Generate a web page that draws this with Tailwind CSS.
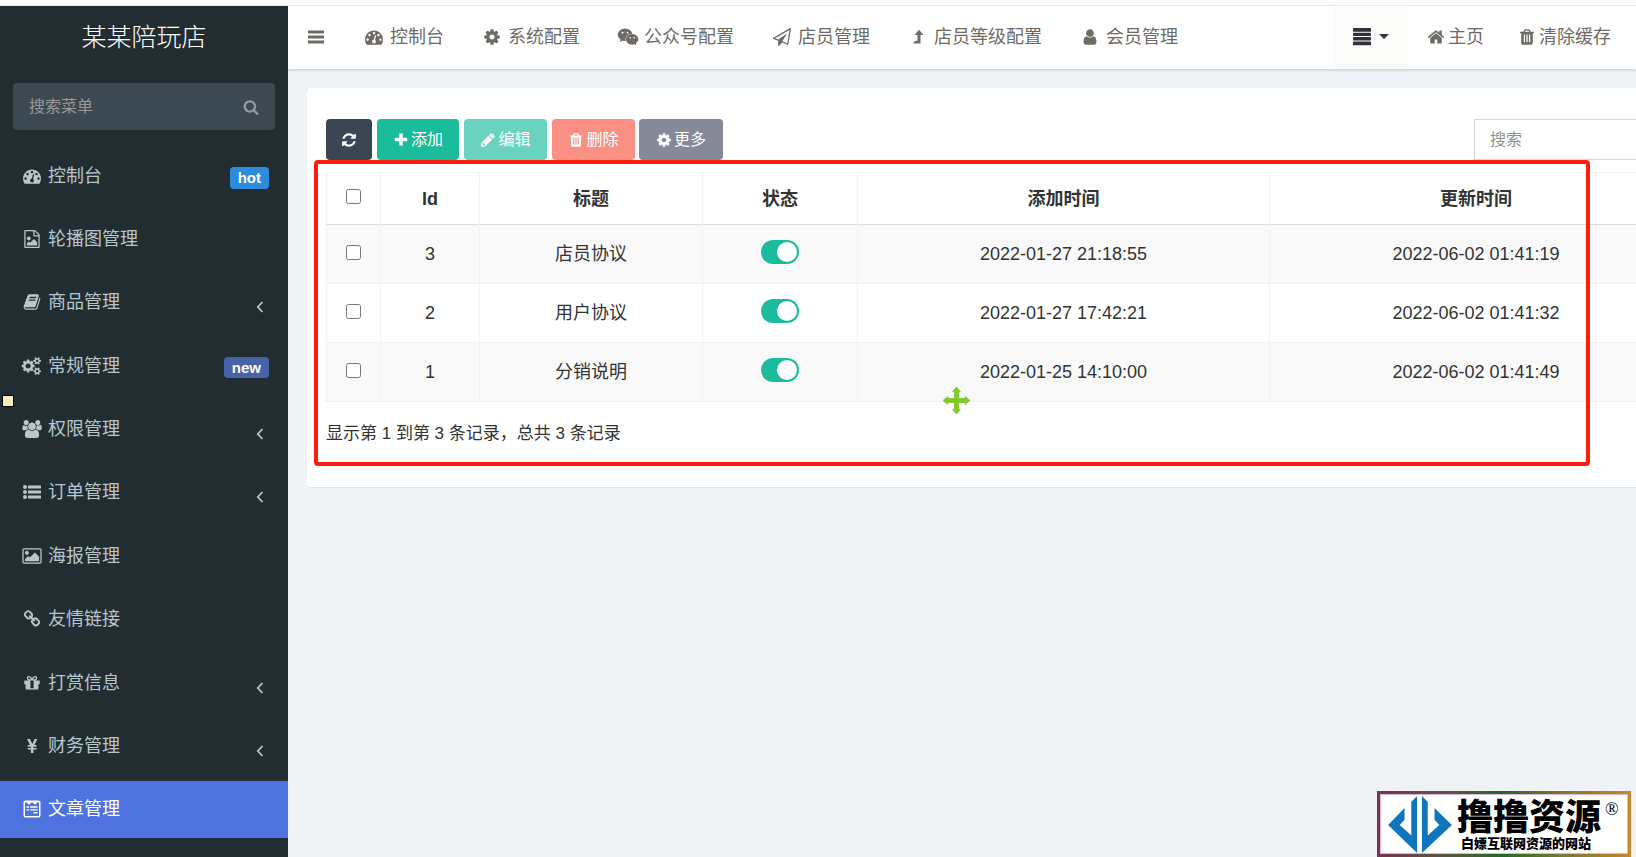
<!DOCTYPE html>
<html lang="zh-CN">
<head>
<meta charset="utf-8">
<meta name="viewport" content="width=device-width, initial-scale=1">
<title>某某陪玩店</title>
<script src="https://cdn.jsdelivr.net/npm/@tailwindcss/browser@4"></script>
</head>
<body class="relative flex h-screen flex-col overflow-hidden bg-white font-['Liberation_Sans','Noto_Sans_CJK_SC',sans-serif] text-lg leading-6 text-[#333]">

<!-- icon sprite -->
<svg class="hidden" aria-hidden="true">
  <symbol id="dash" viewBox="0 0 1792 1792"><path d="M384 1152q0-53-37.500-90.500t-90.500-37.500-90.500 37.500-37.500 90.500 37.500 90.500 90.500 37.500 90.500-37.500 37.500-90.500zm192-448q0-53-37.500-90.500t-90.500-37.500-90.500 37.500-37.500 90.500 37.500 90.500 90.500 37.500 90.500-37.500 37.500-90.500zm428 481l101-382q6-26-7.500-48.500t-38.500-29.500-48 6.500-30 39.500l-101 382q-60 5-107 43.500t-63 98.500q-20 77 20 146t117 89 146-20 89-117q16-60-6-117t-72-91zm660-33q0-53-37.500-90.500t-90.500-37.500-90.500 37.500-37.500 90.500 37.500 90.500 90.500 37.500 90.500-37.500 37.500-90.500zm-640-640q0-53-37.500-90.500t-90.500-37.500-90.500 37.500-37.500 90.500 37.500 90.500 90.500 37.500 90.500-37.500 37.500-90.500zm448 192q0-53-37.500-90.500t-90.500-37.500-90.500 37.500-37.500 90.500 37.500 90.500 90.500 37.500 90.500-37.500 37.500-90.500zm320 448q0 261-141 483-19 29-54 29h-1402q-35 0-54-29-141-221-141-483 0-182 71-348t191-286 286-191 348-71 348 71 286 191 191 286 71 348z"/></symbol>
  <symbol id="cog" viewBox="0 0 1792 1792"><path d="M1152 896q0-106-75-181t-181-75-181 75-75 181 75 181 181 75 181-75 75-181zm512-109v222q0 12-8 23t-20 13l-185 28q-19 54-39 91 35 50 107 138 10 12 10 25t-9 23q-27 37-99 108t-94 71q-12 0-26-9l-138-108q-44 23-91 38-16 136-29 186-7 28-36 28h-222q-14 0-24.500-8.500t-11.500-21.500l-28-184q-49-16-90-37l-141 107q-10 9-25 9-14 0-25-11-126-114-165-168-7-10-7-23 0-12 8-23 15-21 51-66.500t54-70.500q-27-50-41-99l-183-27q-13-2-21-12.500t-8-23.500v-222q0-12 8-23t19-13l186-28q14-46 39-92-40-57-107-138-10-12-10-24 0-10 9-23 26-36 98.500-107.500t94.500-71.500q13 0 26 10l138 107q44-23 91-38 16-136 29-186 7-28 36-28h222q14 0 24.500 8.500t11.500 21.500l28 184q49 16 90 37l142-107q9-9 24-9 13 0 25 10 129 119 165 170 7 8 7 22 0 12-8 23-15 21-51 66.500t-54 70.500q26 50 41 98l183 28q13 2 21 12.500t8 23.500z"/></symbol>
  <symbol id="search" viewBox="0 0 1792 1792"><path d="M1216 832q0-185-131.500-316.500t-316.500-131.500-316.500 131.500-131.500 316.500 131.500 316.500 316.500 131.500 316.500-131.500 131.500-316.500zm512 832q0 52-38 90t-90 38q-54 0-90-38l-343-342q-179 124-399 124-143 0-273.500-55.500t-225-150-150-225-55.500-273.500 55.500-273.500 150-225 225-150 273.500-55.500 273.500 55.500 225 150 150 225 55.500 273.500q0 220-124 399l343 343q37 37 37 90z"/></symbol>
  <symbol id="user" viewBox="0 0 1792 1792"><path d="M1536 1399q0 109-62.500 187t-150.500 78h-854q-88 0-150.500-78t-62.500-187q0-85 8.500-160.500t31.500-152 58.500-131 94-89 134.500-34.500q131 128 313 128t313-128q76 0 134.500 34.500t94 89 58.500 131 31.500 152 8.500 160.500zm-256-887q0 159-112.500 271.500t-271.500 112.500-271.500-112.500-112.500-271.500 112.500-271.500 271.500-112.500 271.500 112.500 112.500 271.500z"/></symbol>
  <symbol id="home" viewBox="0 0 1792 1792"><path d="M1472 992v480q0 26-19 45t-45 19h-384v-384h-256v384h-384q-26 0-45-19t-19-45v-480q0-1 .5-3t.5-3l575-474 575 474q1 2 1 6zm223-69l-62 74q-8 9-21 11h-3q-13 0-21-7l-692-577-692 577q-12 8-24 7-13-2-21-11l-62-74q-8-10-7-23.500t11-21.500l719-599q32-26 76-26t76 26l244 204v-195q0-14 9-23t23-9h192q14 0 23 9t9 23v408l219 182q10 8 11 21.500t-7 23.500z"/></symbol>
  <symbol id="trash" viewBox="0 0 1792 1792"><path d="M704 1376v-704q0-14-9-23t-23-9h-64q-14 0-23 9t-9 23v704q0 14 9 23t23 9h64q14 0 23-9t9-23zm256 0v-704q0-14-9-23t-23-9h-64q-14 0-23 9t-9 23v704q0 14 9 23t23 9h64q14 0 23-9t9-23zm256 0v-704q0-14-9-23t-23-9h-64q-14 0-23 9t-9 23v704q0 14 9 23t23 9h64q14 0 23-9t9-23zm-544-992h448l-48-117q-7-9-17-11h-317q-10 2-17 11zm928 32v64q0 14-9 23t-23 9h-96v948q0 83-47 143.500t-113 60.500h-832q-66 0-113-58.500t-47-141.500v-952h-96q-14 0-23-9t-9-23v-64q0-14 9-23t23-9h309l70-167q15-37 54-63t79-26h320q40 0 79 26t54 63l70 167h309q14 0 23 9t9 23z"/></symbol>
  <symbol id="refresh" viewBox="0 0 1792 1792"><path d="M1639 1056q0 5-1 7-64 268-268 434.500t-478 166.500q-146 0-282.500-55t-243.500-157l-129 129q-19 19-45 19t-45-19-19-45v-448q0-26 19-45t45-19h448q26 0 45 19t19 45-19 45l-137 137q71 66 161 102t187 36q134 0 250-65t186-179q11-17 53-117 8-23 30-23h192q13 0 22.500 9.500t9.500 22.500zm25-800v448q0 26-19 45t-45 19h-448q-26 0-45-19t-19-45 19-45l138-138q-148-137-349-137-134 0-250 65t-186 179q-11 17-53 117-8 23-30 23h-199q-13 0-22.500-9.500t-9.500-22.500v-7q65-268 270-434.500t480-166.500q146 0 284 55.500t245 156.500l130-129q19-19 45-19t45 19 19 45z"/></symbol>
  <symbol id="plus" viewBox="0 0 1792 1792"><path d="M1600 736v192q0 40-28 68t-68 28h-416v416q0 40-28 68t-68 28h-192q-40 0-68-28t-28-68v-416h-416q-40 0-68-28t-28-68v-192q0-40 28-68t68-28h416v-416q0-40 28-68t68-28h192q40 0 68 28t28 68v416h416q40 0 68 28t28 68z"/></symbol>
  <symbol id="pencil" viewBox="0 0 1792 1792"><path d="M491 1536l91-91-235-235-91 91v107h128v128h107zm523-928q0-22-22-22-10 0-17 7l-542 542q-7 7-7 17 0 22 22 22 10 0 17-7l542-542q7-7 7-17zm-54-192l416 416-832 832h-416v-416zm683 96q0 53-37 90l-166 166-416-416 166-165q36-38 90-38 53 0 91 38l235 234q37 39 37 91z"/></symbol>
  <symbol id="book" viewBox="0 0 1792 1792"><path d="M1703 478q40 57 18 129l-275 906q-19 64-76.500 107.500t-122.500 43.500h-923q-77 0-148.500-53.500t-99.500-131.500q-24-67-2-127 0-4 3-27t4-37q1-8-3-21.500t-3-19.500q2-11 8-21t16.500-23.500 16.500-23.500q23-38 45-91.500t30-91.500q3-10 .5-30t-.5-28q3-11 17-28t17-23q21-36 42-92t25-90q1-9-2.500-32t.5-28q4-13 22-30.500t22-22.500q19-26 42.500-84.500t27.500-96.500q1-8-3-25.500t-2-26.500q2-8 9-18t18-23 17-21q8-12 16.500-30.500t15-35 16-36 19.500-32 26.500-23.500 36-11.500 47.500 5.500l-1 3q38-9 51-9h761q74 0 114 56t18 130l-274 906q-36 119-71.500 153.500t-128.500 34.500h-869q-27 0-38 15-11 16-1 43 24 70 144 70h923q29 0 56-15.500t35-41.500l300-987q7-22 5-57 38 15 59 43zm-1064 2q-4 13 2 22.500t20 9.500h608q13 0 25.500-9.500t16.500-22.500l21-64q4-13-2-22.500t-20-9.500h-608q-13 0-25.500 9.500t-16.500 22.500zm-83 256q-4 13 2 22.500t20 9.500h608q13 0 25.500-9.500t16.500-22.500l21-64q4-13-2-22.500t-20-9.500h-608q-13 0-25.500 9.500t-16.500 22.500z"/></symbol>
  <symbol id="cogs" viewBox="0 0 1920 1792"><path d="M832 896q0-106-75-181t-181-75-181 75-75 181 75 181 181 75 181-75 75-181zm768 512q0-52-38-90t-90-38-90 38-38 90q0 53 37.500 90.500t90.500 37.500 90.500-37.500 37.500-90.500zm0-1024q0-52-38-90t-90-38-90 38-38 90q0 53 37.500 90.500t90.500 37.500 90.500-37.500 37.500-90.500zm-384 421v185q0 10-7 19.500t-16 10.500l-155 24q-11 35-32 76 34 48 90 115 7 11 7 20 0 12-7 19-23 30-82.500 89.500t-78.500 59.500q-11 0-21-7l-115-90q-37 19-77 31-11 108-23 155-7 24-30 24h-186q-11 0-20-7.500t-10-17.500l-23-153q-34-10-75-31l-118 89q-7 7-20 7-11 0-21-8-144-133-144-160 0-9 7-19 10-14 41-53t47-61q-23-44-35-82l-152-24q-10-1-17-9.500t-7-19.500v-185q0-10 7-19.500t16-10.500l155-24q11-35 32-76-34-48-90-115-7-11-7-20 0-12 7-20 22-30 82-89t79-59q11 0 21 7l115 90q34-18 77-32 11-108 23-154 7-24 30-24h186q11 0 20 7.500t10 17.500l23 153q34 10 75 31l118-89q8-7 20-7 11 0 21 8 144 133 144 160 0 8-7 19-12 16-42 54t-45 60q23 48 34 82l152 23q10 2 17 10.500t7 19.500zm640 533v140q0 16-149 31-12 27-30 52 51 113 51 138 0 4-4 7-122 71-124 71-8 0-46-47t-52-68q-20 2-30 2t-30-2q-14 21-52 68t-46 47q-2 0-124-71-4-3-4-7 0-25 51-138-18-25-30-52-149-15-149-31v-140q0-16 149-31 13-29 30-52-51-113-51-138 0-4 4-7 4-2 35-20t59-34 30-16q8 0 46 46.500t52 67.500q20-2 30-2t30 2q51-71 92-112l6-2q4 0 124 70 4 3 4 7 0 25-51 138 17 23 30 52 149 15 149 31zm0-1024v140q0 16-149 31-12 27-30 52 51 113 51 138 0 4-4 7-122 71-124 71-8 0-46-47t-52-68q-20 2-30 2t-30-2q-14 21-52 68t-46 47q-2 0-124-71-4-3-4-7 0-25 51-138-18-25-30-52-149-15-149-31v-140q0-16 149-31 13-29 30-52-51-113-51-138 0-4 4-7 4-2 35-20t59-34 30-16q8 0 46 46.500t52 67.500q20-2 30-2t30 2q51-71 92-112l6-2q4 0 124 70 4 3 4 7 0 25-51 138 17 23 30 52 149 15 149 31z"/></symbol>
  <symbol id="users" viewBox="0 0 1920 1792"><path d="M593 896q-162 5-265 128h-134q-82 0-138-40.500t-56-118.500q0-353 124-353 6 0 43.500 21t97.500 42.500 119 21.500q67 0 133-23-5 37-5 66 0 159 93 294zm1071 637q0 120-73 189.500t-194 69.500h-874q-121 0-194-69.500t-73-189.500q0-53 3.500-103.500t14-109 26.500-108.500 43-97.500 62-81 85.500-53.500 111.500-20q10 0 43 21.500t73 48 107 48 135 21.500 135-21.500 107-48 73-48 43-21.500q61 0 111.500 20t85.500 53.500 62 81 43 97.500 26.500 108.500 14 109 3.500 103.500zm-1024-1277q0 106-75 181t-181 75-181-75-75-181 75-181 181-75 181 75 75 181zm704 384q0 159-112.500 271.500t-271.500 112.500-271.500-112.500-112.500-271.500 112.500-271.500 271.500-112.500 271.500 112.500 112.500 271.500zm576 225q0 78-56 118.500t-138 40.500h-134q-103-123-265-128 93-135 93-294 0-29-5-66 66 23 133 23 59 0 119-21.500t97.500-42.500 43.500-21q124 0 124 353zm-128-609q0 106-75 181t-181 75-181-75-75-181 75-181 181-75 181 75 75 181z"/></symbol>
  <symbol id="list" viewBox="0 0 18 18"><circle cx="2" cy="4" r="2"/><circle cx="2" cy="9" r="2"/><circle cx="2" cy="14" r="2"/><rect x="5" y="2.500" width="13" height="3" rx=".5"/><rect x="5" y="7.500" width="13" height="3" rx=".5"/><rect x="5" y="12.500" width="13" height="3" rx=".5"/></symbol>
  <symbol id="image" viewBox="-64 0 1920 1792"><path d="M576 576q0 80-56 136t-136 56-136-56-56-136 56-136 136-56 136 56 56 136zm1024 384v448h-1408v-192l320-320 160 160 512-512zm96-704h-1600q-13 0-22.500 9.500t-9.500 22.500v1216q0 13 9.500 22.500t22.500 9.500h1600q13 0 22.500-9.500t9.500-22.500v-1216q0-13-9.500-22.500t-22.500-9.500zm160 32v1216q0 66-47 113t-113 47h-1600q-66 0-113-47t-47-113v-1216q0-66 47-113t113-47h1600q66 0 113 47t47 113z"/></symbol>
  <symbol id="file" viewBox="0 0 1792 1792"><path d="M1596 380q28 28 48 76t20 88v1152q0 40-28 68t-68 28h-1344q-40 0-68-28t-28-68v-1600q0-40 28-68t68-28h896q40 0 88 20t76 48zm-444-244v376h376q-10-29-22-41l-313-313q-12-12-41-22zm384 1528v-1024h-416q-40 0-68-28t-28-68v-416h-768v1536h1280zm-128-448v320h-1024v-192l192-192 128 128 384-384zm-832-192q-80 0-136-56t-56-136 56-136 136-56 136 56 56 136-56 136-136 56z"/></symbol>
  <symbol id="link" viewBox="0 0 1792 1792"><path d="M1520 1216q0-40-28-68l-208-208q-28-28-68-28-42 0-72 32 3 3 19 18.500t21.500 21.500 15 19 13 25.500 3.500 27.500q0 40-28 68t-68 28q-15 0-27.500-3.500t-25.500-13-19-15-21.500-21.500-18.500-19q-33 31-33 73 0 40 28 68l206 207q27 27 68 27 40 0 68-26l147-146q28-28 28-67zm-703-705q0-40-28-68l-206-207q-28-28-68-28-39 0-68 27l-147 146q-28 28-28 67 0 40 28 68l208 208q27 27 68 27 42 0 72-31-3-3-19-18.500t-21.500-21.500-15-19-13-25.500-3.500-27.500q0-40 28-68t68-28q15 0 27.500 3.500t25.500 13 19 15 21.500 21.500 18.500 19q33-31 33-73zm895 705q0 120-85 203l-147 146q-83 83-203 83-121 0-204-85l-206-207q-83-83-83-203 0-123 88-209l-88-88q-86 88-208 88-120 0-204-84l-208-208q-84-84-84-204t85-203l147-146q83-83 203-83 121 0 204 85l206 207q83 83 83 203 0 123-88 209l88 88q86-88 208-88 120 0 204 84l208 208q84 84 84 204z"/></symbol>
  <symbol id="gift" viewBox="0 0 1792 1792"><path d="M1056 1356v-716h-320v716q0 25 18 38.500t46 13.500h192q28 0 46-13.500t18-38.500zm-456-844h195l-126-161q-26-31-69-31-40 0-68 28t-28 68 28 68 68 28zm688-96q0-40-28-68t-68-28q-43 0-69 31l-125 161h194q40 0 68-28t28-68zm376 256v320q0 14-9 23t-23 9h-96v416q0 40-28 68t-68 28h-1088q-40 0-68-28t-28-68v-416h-96q-14 0-23-9t-9-23v-320q0-14 9-23t23-9h440q-93 0-158.500-65.500t-65.500-158.500 65.500-158.500 158.500-65.500q107 0 168 77l128 165 128-165q61-77 168-77 93 0 158.500 65.500t65.500 158.500-65.500 158.500-158.500 65.500h440q14 0 23 9t9 23z"/></symbol>
  <symbol id="yen" viewBox="0 0 18 18"><path d="M4 2h3l2.300 5L11.600 2H14.400L11.300 8H13.500V9.700H10.400V11H13.500V12.600H10.400V16H7.900V12.600H4.800V11H7.900V9.700H4.800V8H7z"/></symbol>
  <symbol id="form" viewBox="0 0 18 18"><path fill-rule="evenodd" d="M2.500 .5h13q2 0 2 2v13q0 2-2 2h-13q-2 0-2-2v-13q0-2 2-2zM2 3v12.500q0 .5.500.5h13q.5 0 .5-.5V3l-1-1-3 2.800L9 2.300 6 4.800 3 2zM3.500 6.300H6v1.400H3.500zm3.500 0h7.500v1.400H7zM3.500 9.200H6v1.400H3.500zm3.500 0h7.500v1.400H7zm3.500 2.800h4v1.600h-4z"/></symbol>
  <symbol id="plane" viewBox="0 0 1792 1792"><path d="M1764 11q33 24 27 64l-256 1536q-5 29-32 45-14 8-31 8-11 0-24-5l-527-215-298 327q-18 21-47 21-14 0-23-4-19-7-30-23.500t-11-36.500v-452l-472-193q-37-14-40-55-3-39 32-59l1664-960q35-21 68 2zm-342 1499l221-1323-1434 827 336 137 863-639-478 797z"/></symbol>
  <symbol id="wechat" viewBox="0 0 2048 1792"><path d="M580 461q0-41-25-66t-66-25q-43 0-76 25.500t-33 65.500q0 39 33 64.500t76 25.500q41 0 66-24.500t25-65.500zm743 507q0-28-25.500-50t-65.500-22q-27 0-49.500 22.500t-22.500 49.500q0 28 22.500 50.500t49.500 22.500q40 0 65.500-22t25.500-51zm-236-507q0-41-24.500-66t-65.500-25q-43 0-76 25.500t-33 65.500q0 39 33 64.500t76 25.500q41 0 65.500-24.500t24.500-65.500zm635 507q0-28-26-50t-65-22q-27 0-49.500 22.500t-22.500 49.500q0 28 22.500 50.500t49.500 22.500q39 0 65-22t26-51zm-266-397q-31-4-70-4-169 0-311 77t-223.500 208.500-81.500 287.500q0 78 23 152-35 3-68 3-26 0-50-1.500t-55-6.500-44.500-7-54.500-10.500-50-10.500l-253 127 72-218q-290-203-290-490 0-169 97.500-311t264-223.500 363.500-81.500q176 0 332.500 66t262 182.500 136.500 260.500zm592 561q0 117-68.500 223.500t-185.500 193.500l55 181-199-109q-150 37-218 37-169 0-311-70.500t-223.500-191.500-81.500-264 81.500-264 223.500-191.500 311-70.500q161 0 303 70.500t227.500 192 85.500 263.500z"/></symbol>
  <symbol id="levelup" viewBox="0 0 18 18"><path d="M4 15.500L6.300 12.800H8.500V7H5.600L10 1.700 14.400 7H11.500V15.500z"/></symbol>
  <symbol id="bars" viewBox="0 0 18 18"><rect x="1" y="2.500" width="16" height="3" rx=".6"/><rect x="1" y="7.500" width="16" height="3" rx=".6"/><rect x="1" y="12.500" width="16" height="3" rx=".6"/></symbol>
  <symbol id="bars4" viewBox="0 0 18 18"><rect y="0" width="18" height="3.700" rx=".8"/><rect y="4.700" width="18" height="3.300" rx=".8"/><rect y="9" width="18" height="3.500" rx=".8"/><rect y="13.500" width="18" height="3.700" rx=".8"/></symbol>
  <symbol id="left" viewBox="0 0 8 12"><path d="M6.500 1L1.800 6l4.700 5" fill="none" stroke="currentColor" stroke-width="1.800"/></symbol>
</svg>

<div class="h-[6px] shrink-0 border-b border-[#ebebeb]"></div>

<div class="flex min-h-0 flex-1">
  <aside class="flex w-72 shrink-0 flex-col bg-[#222d32] pb-[19px] text-[#b8c7ce]">
    <h1 class="flex h-[62px] items-center justify-center text-[25px] font-light text-white">某某陪玩店</h1>
    <form class="mx-[13px] mt-[15px] flex h-[47px] shrink-0 items-center rounded-sm bg-[#3c4852] px-4 text-[#999]">
      <input type="text" aria-label="搜索菜单" placeholder="搜索菜单" class="min-w-0 flex-1 bg-transparent text-base outline-none placeholder:text-[#999]">
      <button type="button" aria-label="搜索"><svg class="size-4 fill-current"><use href="#search"/></svg></button>
    </form>
    <nav class="mt-[17px] min-h-0 flex-1">
      <ul class="flex h-full flex-col justify-between">
        <li><a href="#" class="flex h-[57px] items-center gap-[5px] pl-[21px] pr-[19px]"><svg class="h-[18px] w-[22px] fill-current"><use href="#dash"/></svg>控制台<span class="ml-auto mt-1 rounded-sm bg-[#2d8cdb] px-2 text-[15px] leading-[22px] font-bold text-white">hot</span></a></li>
        <li><a href="#" class="flex h-[57px] items-center gap-[5px] pl-[21px] pr-[19px]"><svg class="h-[18px] w-[22px] fill-current"><use href="#file"/></svg>轮播图管理</a></li>
        <li><a href="#" class="flex h-[57px] items-center gap-[5px] pl-[21px] pr-6"><svg class="h-[18px] w-[22px] fill-current"><use href="#book"/></svg>商品管理<svg class="ml-auto mt-[10px] h-3 w-2"><use href="#left"/></svg></a></li>
        <li><a href="#" class="flex h-[57px] items-center gap-[5px] pl-[21px] pr-[19px]"><svg class="h-[18px] w-[22px] fill-current"><use href="#cogs"/></svg>常规管理<span class="ml-auto mt-1 rounded-sm bg-[#4862a8] px-2 text-[15px] leading-[21px] font-bold text-white">new</span></a></li>
        <li><a href="#" class="flex h-[57px] items-center gap-[5px] pl-[21px] pr-6"><svg class="h-[18px] w-[22px] fill-current"><use href="#users"/></svg>权限管理<svg class="ml-auto mt-[10px] h-3 w-2"><use href="#left"/></svg></a></li>
        <li><a href="#" class="flex h-[57px] items-center gap-[5px] pl-[21px] pr-6"><svg class="h-[18px] w-[22px] fill-current"><use href="#list"/></svg>订单管理<svg class="ml-auto mt-[10px] h-3 w-2"><use href="#left"/></svg></a></li>
        <li><a href="#" class="flex h-[57px] items-center gap-[5px] pl-[21px] pr-6"><svg class="h-[18px] w-[22px] fill-current"><use href="#image"/></svg>海报管理</a></li>
        <li><a href="#" class="flex h-[57px] items-center gap-[5px] pl-[21px] pr-6"><svg class="h-[18px] w-[22px] fill-current"><use href="#link"/></svg>友情链接</a></li>
        <li><a href="#" class="flex h-[57px] items-center gap-[5px] pl-[21px] pr-6"><svg class="h-[18px] w-[22px] fill-current"><use href="#gift"/></svg>打赏信息<svg class="ml-auto mt-[10px] h-3 w-2"><use href="#left"/></svg></a></li>
        <li><a href="#" class="flex h-[57px] items-center gap-[5px] pl-[21px] pr-6"><svg class="h-[18px] w-[22px] fill-current"><use href="#yen"/></svg>财务管理<svg class="ml-auto mt-[10px] h-3 w-2"><use href="#left"/></svg></a></li>
        <li><a href="#" aria-current="page" class="flex h-[57px] items-center gap-[5px] bg-[#4e73df] pl-[21px] pr-6 text-white"><svg class="h-[18px] w-[22px] fill-current"><use href="#form"/></svg>文章管理</a></li>
      </ul>
    </nav>
  </aside>

  <div class="flex min-w-0 flex-1 flex-col overflow-hidden bg-[#eff3f6]">
    <header class="flex h-[63px] shrink-0 items-start bg-white whitespace-nowrap text-[#6e6b64] shadow-[0_1px_3px_rgba(0,0,0,0.18)]">
      <button type="button" aria-label="切换菜单" class="ml-[19px] flex h-[61px] items-center"><svg class="size-[18px] fill-current"><use href="#bars"/></svg></button>
      <nav class="ml-[38px] flex h-[61px] items-center gap-[37px]">
        <a href="#" class="flex items-center gap-[5px]"><svg class="h-[18px] w-[22px] fill-current"><use href="#dash"/></svg>控制台</a>
        <a href="#" class="flex items-center gap-[5px]"><svg class="h-[18px] w-[22px] fill-current"><use href="#cog"/></svg>系统配置</a>
        <a href="#" class="flex items-center gap-[5px]"><svg class="h-[18px] w-[22px] fill-current"><use href="#wechat"/></svg>公众号配置</a>
        <a href="#" class="flex items-center gap-[5px]"><svg class="h-[18px] w-[22px] fill-current"><use href="#plane"/></svg>店员管理</a>
        <a href="#" class="flex items-center gap-[5px]"><svg class="h-[18px] w-[22px] fill-current"><use href="#levelup"/></svg>店员等级配置</a>
        <a href="#" class="flex items-center gap-[5px]"><svg class="h-[18px] w-[22px] fill-current"><use href="#user"/></svg>会员管理</a>
      </nav>
      <div class="ml-auto flex h-[61px] items-center pr-[25px]">
        <button type="button" aria-label="更多标签" class="flex h-full w-[74px] items-center justify-center gap-2 bg-[#fbfbf9] text-[#333039]"><svg class="size-[18px] fill-current"><use href="#bars4"/></svg><svg class="h-[5px] w-[10px] fill-current" viewBox="0 0 10 5"><path d="M0 0h10L5 5z"/></svg></button>
        <a href="#" class="ml-[19px] flex items-center gap-[3px]"><svg class="size-[18px] fill-current"><use href="#home"/></svg>主页</a>
        <a href="#" class="ml-[34px] flex items-center gap-[3px]"><svg class="size-[18px] fill-current"><use href="#trash"/></svg>清除缓存</a>
      </div>
    </header>

    <main class="relative mt-[19px] ml-[19px] w-max min-w-full rounded-sm bg-white px-[19px] pt-[31px] pb-[41px] shadow-[0_1px_1px_rgba(0,0,0,0.06)]">
      <div class="flex items-center text-base text-white">
        <button type="button" aria-label="刷新" class="flex h-[41px] w-[46px] items-center justify-center rounded-sm bg-[#3a4652]"><svg class="size-4 fill-current"><use href="#refresh"/></svg></button>
        <button type="button" class="ml-[5px] flex h-[41px] w-[82px] items-center justify-center gap-[2px] rounded-sm bg-[#1abc9c]"><svg class="size-4 fill-current"><use href="#plus"/></svg>添加</button>
        <button type="button" class="ml-[5px] flex h-[41px] w-[83px] items-center justify-center gap-[2px] rounded-sm bg-[#69d3bf]"><svg class="size-4 fill-current"><use href="#pencil"/></svg>编辑</button>
        <button type="button" class="ml-[5px] flex h-[41px] w-[83px] items-center justify-center gap-[2px] rounded-sm bg-[#fa8f84]"><svg class="size-4 fill-current"><use href="#trash"/></svg>删除</button>
        <button type="button" class="ml-1 flex h-[41px] w-[84px] items-center justify-center gap-[2px] rounded-sm bg-[#868997]"><svg class="size-4 fill-current"><use href="#cog"/></svg>更多</button>
        <input type="text" aria-label="搜索" placeholder="搜索" class="ml-auto h-[41px] w-[209px] border border-[#d5d8da] px-[15px] text-[#333] outline-none placeholder:text-[#8d9490]">
      </div>

      <table class="mt-3 w-[1356px] table-fixed border-collapse border border-[#f2f2f2] text-center">
        <colgroup><col class="w-[54px]"><col class="w-[99px]"><col class="w-[223px]"><col class="w-[155px]"><col class="w-[412px]"><col class="w-[413px]"></colgroup>
        <thead>
          <tr class="h-[52px] border-b border-b-[#dcdcdc]">
            <th class="border-r border-[#f2f2f2] pb-[6px]"><input type="checkbox" aria-label="全选" class="size-[15px] align-middle"></th>
            <th class="border-r border-[#f2f2f2]">Id</th><th class="border-r border-[#f2f2f2]">标题</th><th class="border-r border-[#f2f2f2]">状态</th><th class="border-r border-[#f2f2f2]">添加时间</th><th>更新时间</th>
          </tr>
        </thead>
        <tbody>
          <tr class="h-[59px] border-b border-[#f2f2f2] bg-[#f9f9f9]">
            <td class="border-r border-[#f2f2f2] pb-[6px]"><input type="checkbox" aria-label="选择 3" class="size-[15px] align-middle"></td>
            <td class="border-r border-[#f2f2f2]">3</td><td class="border-r border-[#f2f2f2]">店员协议</td>
            <td class="border-r border-[#f2f2f2] pb-[5px]"><button type="button" role="switch" aria-checked="true" aria-label="状态 3" class="inline-flex h-6 w-[38px] items-center justify-end rounded-full bg-[#1abc9c] pr-[2px] align-middle"><span class="size-5 rounded-full bg-white"></span></button></td>
            <td class="border-r border-[#f2f2f2]">2022-01-27 21:18:55</td><td>2022-06-02 01:41:19</td>
          </tr>
          <tr class="h-[59px] border-b border-[#f2f2f2]">
            <td class="border-r border-[#f2f2f2] pb-[6px]"><input type="checkbox" aria-label="选择 2" class="size-[15px] align-middle"></td>
            <td class="border-r border-[#f2f2f2]">2</td><td class="border-r border-[#f2f2f2]">用户协议</td>
            <td class="border-r border-[#f2f2f2] pb-[5px]"><button type="button" role="switch" aria-checked="true" aria-label="状态 2" class="inline-flex h-6 w-[38px] items-center justify-end rounded-full bg-[#1abc9c] pr-[2px] align-middle"><span class="size-5 rounded-full bg-white"></span></button></td>
            <td class="border-r border-[#f2f2f2]">2022-01-27 17:42:21</td><td>2022-06-02 01:41:32</td>
          </tr>
          <tr class="h-[59px] bg-[#f9f9f9]">
            <td class="border-r border-[#f2f2f2] pb-[6px]"><input type="checkbox" aria-label="选择 1" class="size-[15px] align-middle"></td>
            <td class="border-r border-[#f2f2f2]">1</td><td class="border-r border-[#f2f2f2]">分销说明</td>
            <td class="border-r border-[#f2f2f2] pb-[5px]"><button type="button" role="switch" aria-checked="true" aria-label="状态 1" class="inline-flex h-6 w-[38px] items-center justify-end rounded-full bg-[#1abc9c] pr-[2px] align-middle"><span class="size-5 rounded-full bg-white"></span></button></td>
            <td class="border-r border-[#f2f2f2]">2022-01-25 14:10:00</td><td>2022-06-02 01:41:49</td>
          </tr>
        </tbody>
      </table>
      <p class="mt-5 text-[17px]">显示第 1 到第 3 条记录，总共 3 条记录</p>

      <!-- annotation frame over the table -->
      <div class="pointer-events-none absolute top-[72px] left-[7px] h-[306px] w-[1276px] rounded-sm border-4 border-[#ff1d12]"></div>
      <svg class="pointer-events-none absolute top-[299px] left-[636px] size-[27px] fill-[#82c92e]" viewBox="0 0 28 28"><path d="M14 0l4 5h-2v7h7v-2l5 4-5 4v-2h-7v7h2l-4 5-4-5h2v-7H5v2l-5-4 5-4v2h7V5h-2z" stroke="#82c92e"/></svg>
    </main>
  </div>
</div>

<!-- selection handle -->
<div class="absolute top-[395px] left-[2px] size-3 border border-black bg-[#f7edba]"></div>

<!-- site watermark -->
<div class="absolute right-[5px] bottom-0 h-[66px] w-[254px] bg-linear-to-r from-[#7b3050] via-[#1c6a25] to-[#c8872c] p-[3px]">
  <div class="flex h-full border border-[#d9b8dc] bg-white text-black">
    <svg class="ml-[6px] h-full w-[66px] shrink-0 fill-[#0f75bd]" viewBox="0 0 66 60"><path d="M30 1v59L0 31 17 13.500v12L12 31l12 11V7zM35 1v59L66 31 48 13.500v12L53 31 41 42V7z"/></svg>
    <div class="ml-1 flex flex-col whitespace-nowrap">
      <div class="flex gap-1"><span class="mt-1 text-4xl leading-[37px] font-black">撸撸资源</span><span class="font-['Liberation_Serif',serif] text-lg leading-[28px]">®</span></div>
      <span class="ml-1 text-[13px] leading-[16px] font-black">白嫖互联网资源的网站</span>
    </div>
  </div>
</div>
</body>
</html>
